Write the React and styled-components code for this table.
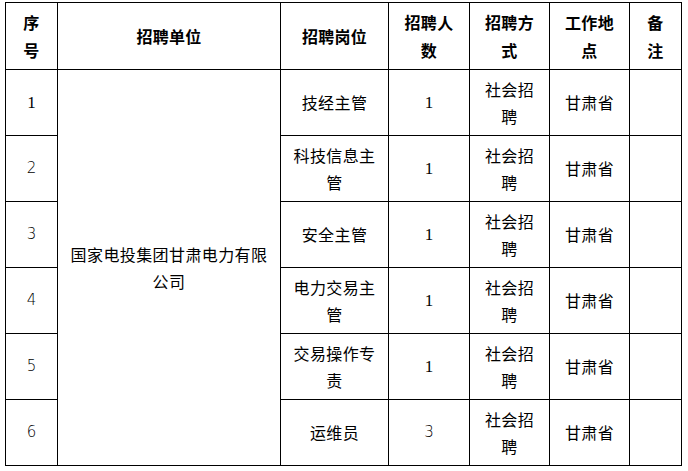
import React from 'react';
import styled, { createGlobalStyle } from 'styled-components';

const GlobalStyle = createGlobalStyle`
  body {
    margin: 0;
    background: #fff;
    font-family: "Noto Sans CJK SC", "Liberation Sans", sans-serif;
    color: #000;
  }
`;

const columns = [52, 223, 108, 81, 80, 80, 52];

const rows = [
  { no: '1', post: '技经主管', count: '1', serifNo: true },
  { no: '2', post: '科技信息主管', count: '1' },
  { no: '3', post: '安全主管', count: '1' },
  { no: '4', post: '电力交易主管', count: '1' },
  { no: '5', post: '交易操作专责', count: '1' },
  { no: '6', post: '运维员', count: '3', sansCount: true },
];

const App = () => {
  return (
    <Page>
      <GlobalStyle />
      <Table>
        <colgroup>
          {columns.map((w, i) => (
            <col key={i} style={{ width: w }} />
          ))}
        </colgroup>
        <thead>
          <HeadRow>
            <Th>序号</Th>
            <Th>招聘单位</Th>
            <Th>招聘岗位</Th>
            <Th>招聘人数</Th>
            <Th>招聘方式</Th>
            <Th>工作地点</Th>
            <Th>备注</Th>
          </HeadRow>
        </thead>
        <tbody>
          {rows.map((r, i) => (
            <BodyRow key={r.no}>
              <Digit $serif={r.serifNo}>{r.no}</Digit>
              {i === 0 && <Td rowSpan={rows.length}>国家电投集团甘肃电力有限公司</Td>}
              <Td>{r.post}</Td>
              <Digit $serif={!r.sansCount}>{r.count}</Digit>
              <Td>社会招聘</Td>
              <Td>甘肃省</Td>
              <Td></Td>
            </BodyRow>
          ))}
        </tbody>
      </Table>
    </Page>
  );
};

const Page = styled.div`
  padding: 2px 0 0 5px;
`;

const Table = styled.table`
  width: 676px;
  border-collapse: collapse;
  table-layout: fixed;
`;

const HeadRow = styled.tr`
  height: 67px;
`;

const BodyRow = styled.tr`
  height: 66px;
`;

const Th = styled.th`
  border: 1px solid #000;
  padding: 0 11px;
  font-size: 16px;
  font-weight: bold;
  line-height: 28px;
  text-align: center;
  vertical-align: middle;
  letter-spacing: 0.3px;
`;

const Td = styled.td`
  border: 1px solid #000;
  padding: 0 11px;
  font-size: 16px;
  line-height: 27px;
  text-align: center;
  vertical-align: middle;
  letter-spacing: 0.4px;
`;

const Digit = styled(Td)`
  font-family: ${(p) => (p.$serif ? '"Liberation Serif", serif' : '"DejaVu Sans", "Liberation Sans", sans-serif')};
  font-size: ${(p) => (p.$serif ? '17px' : '15px')};
  font-weight: ${(p) => (p.$serif ? 400 : 200)};
  color: #000;
  letter-spacing: 0;
`;

export default App;
